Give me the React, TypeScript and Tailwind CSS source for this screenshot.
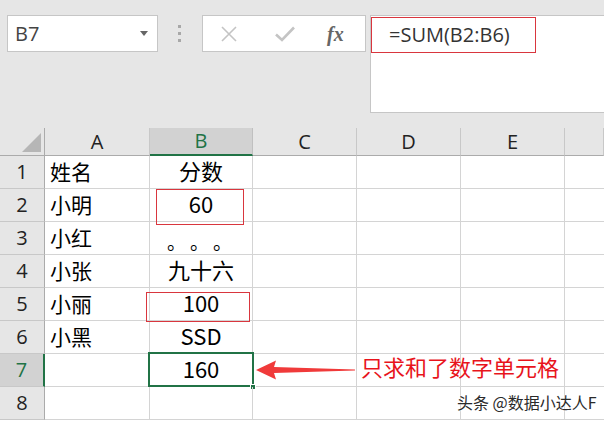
import React from "react";

const FONT = { fontFamily: '"Noto Sans CJK SC", "Noto Sans", sans-serif' };
const HFONT = { fontFamily: '"Open Sans", "Noto Sans", sans-serif' };

const cols = ["A", "B", "C", "D", "E", ""];
const rows: [string, string][] = [
  ["姓名", "分数"],
  ["小明", "60"],
  ["小红", "。。。"],
  ["小张", "九十六"],
  ["小丽", "100"],
  ["小黑", "SSD"],
  ["", "160"],
  ["", ""],
];

export default function App() {
  return (
    <div className="w-[604px] h-[422px] overflow-hidden bg-white relative" style={FONT}>
      {/* Top toolbar */}
      <div className="h-[128px] bg-[#e6e6e6] flex items-start pt-[15px]">
        <div className="ml-[7px] w-[151px] h-[37px] bg-white border border-[#c6c6c6] flex items-center justify-between pl-[7px] pr-[9px]">
          <span className="text-[20px] text-[#444] leading-none" style={HFONT}>B7</span>
          <svg width="8" height="5" viewBox="0 0 8 5"><path d="M0 0h8L4 5z" fill="#666" /></svg>
        </div>
        <div className="ml-[20px] mt-[10px] flex flex-col gap-[4px]">
          <div className="w-[3px] h-[3px] bg-[#a8a8a8]" />
          <div className="w-[3px] h-[3px] bg-[#a8a8a8]" />
          <div className="w-[3px] h-[3px] bg-[#a8a8a8]" />
        </div>
        <div className="ml-[21px] w-[164px] h-[37px] bg-white border border-[#c6c6c6] flex items-center pl-[18px]">
          <svg width="16" height="16" viewBox="0 0 16 16">
            <path d="M1 1L15 15M15 1L1 15" stroke="#c4c4c4" strokeWidth="1.6" fill="none" />
          </svg>
          <svg className="ml-[38px]" width="20" height="16" viewBox="0 0 20 16">
            <path d="M1 8.5L7 14L19 1.5" stroke="#c4c4c4" strokeWidth="2.6" fill="none" />
          </svg>
          <span className="ml-[32px] text-[20px] italic font-bold text-[#666] leading-none" style={{ fontFamily: '"Liberation Serif", serif' }}>
            fx
          </span>
        </div>
        <div className="ml-[4px] flex-1 h-[98px] bg-white border border-r-0 border-[#c6c6c6]">
          <div className="mt-[1px] w-[165px] h-[36px] border border-[#d9363e] flex items-center pl-[17px]">
            <span className="text-[20px] text-[#333] leading-none" style={HFONT}>=SUM(B2:B6)</span>
          </div>
        </div>
      </div>

      {/* Grid */}
      <div className="grid grid-cols-[45px_105px_103px_104px_104px_104px_1fr] grid-rows-[28px_repeat(8,33px)] relative">
        {/* header row */}
        <div className="bg-[#e6e6e6] border-b border-r border-[#ababab] relative">
          <svg className="absolute right-[3px] bottom-[3px]" width="19" height="19" viewBox="0 0 19 19">
            <path d="M19 0V19H0z" fill="#b6b6b6" />
          </svg>
        </div>
        {cols.map((c, i) =>
          c === "B" ? (
            <div
              key={i}
              className="bg-[#d2d2d2] border-b-2 border-[#217346] border-r border-r-[#c0c0c0] flex items-center justify-center text-[20px] text-[#217346]"
              style={HFONT}
            >
              {c}
            </div>
          ) : (
            <div
              key={i}
              className="bg-[#e6e6e6] border-b border-[#ababab] border-r border-r-[#c8c8c8] flex items-center justify-center text-[20px] text-[#222]"
              style={HFONT}
            >
              {c}
            </div>
          )
        )}
        {rows.map((r, ri) => {
          const sel = ri === 6;
          return (
            <React.Fragment key={ri}>
              <div
                className={
                  sel
                    ? "bg-[#d2d2d2] border-r-2 border-[#217346] border-b border-b-[#c8c8c8] flex items-end justify-center pb-[1px] text-[20px] text-[#217346]"
                    : "bg-[#e6e6e6] border-r border-[#ababab] border-b border-b-[#c8c8c8] flex items-end justify-center pb-[1px] text-[20px] text-[#222]"
                }
                style={HFONT}
              >
                {ri + 1}
              </div>
              <div className="border-r border-b border-[#d4d4d4] flex items-end pl-[5px] pb-[3px] text-[21px] leading-[28px] text-black">
                {r[0]}
              </div>
              {ri === 2 ? (
                <div className="border-r border-b border-[#d4d4d4] flex items-end pl-[17px] pb-[3px] text-[19px] leading-none text-black">
                  <span className="w-[23px]">。</span>
                  <span className="w-[23px]">。</span>
                  <span className="w-[23px]">。</span>
                </div>
              ) : (
                <div className="border-r border-b border-[#d4d4d4] flex items-end justify-center pb-[4px] text-[22px] leading-[27px] text-black relative">
                  {r[1]}
                  {ri === 1 && <div className="absolute left-[6px] top-0 w-[88px] h-[36px] border border-[#d9363e]" />}
                  {ri === 4 && <div className="absolute left-[-4px] top-[4px] w-[104px] h-[30px] border border-[#d9363e]" />}
                  {sel && (
                    <>
                      <div className="absolute left-[-2px] top-[-2px] w-[106px] h-[35px] border-2 border-[#217346]" />
                      <div className="absolute right-[-4px] bottom-[-4px] w-[6px] h-[6px] bg-[#217346] border border-white" />
                    </>
                  )}
                </div>
              )}
              <div className="border-r border-b border-[#d4d4d4]" />
              <div className="border-r border-b border-[#d4d4d4]" />
              <div className="border-r border-b border-[#d4d4d4]" />
              <div className="border-b border-[#d4d4d4]" />
            </React.Fragment>
          );
        })}

        {/* Arrow annotation */}
        <svg className="absolute left-[255px] top-[231px]" width="102" height="22" viewBox="0 0 102 22">
          <path d="M1 11L21 1.5L19 8L100 10.5L100 11.5L19 14L21 20.5Z" fill="#f03a3a" />
        </svg>
        <div className="absolute left-[361px] top-[227px] text-[22px] leading-none text-[#e8141c] whitespace-nowrap">
          只求和了数字单元格
        </div>
        <div
          className="absolute left-[457px] top-[266px] text-[16px] leading-none text-[#2a2a2a] whitespace-nowrap"
          style={{ textShadow: "0 0 2px #fff, 0 0 2px #fff" }}
        >
          头条 @数据小达人F
        </div>
      </div>
    </div>
  );
}
